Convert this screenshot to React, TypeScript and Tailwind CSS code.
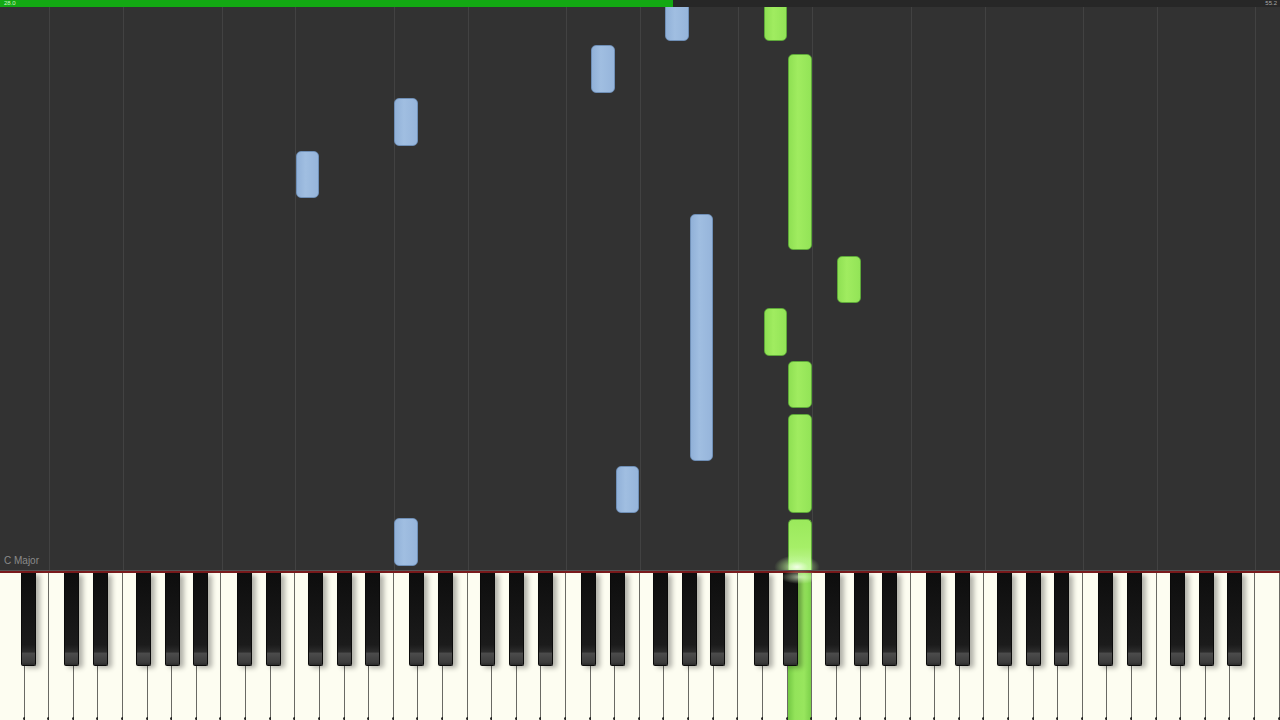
const W = 1280 / 52;
const NAMES = ['C', 'D', 'E', 'F', 'G', 'A', 'B'];
const BLACK_OFFSET: Record<string, number> = { C: -2, D: 2.5, F: -4.5, G: 0, A: 3.5 };

const ROLL_TOP = 7;

type Note = { key: number; y1: number; y2: number; color: 'blue' | 'green' };

const notes: Note[] = [
  { key: 27, y1: -10, y2: 41, color: 'blue' },
  { key: 24, y1: 45, y2: 93, color: 'blue' },
  { key: 16, y1: 98, y2: 146, color: 'blue' },
  { key: 12, y1: 151, y2: 198, color: 'blue' },
  { key: 28, y1: 214, y2: 461, color: 'blue' },
  { key: 25, y1: 466, y2: 513, color: 'blue' },
  { key: 16, y1: 518, y2: 566, color: 'blue' },
  { key: 31, y1: -10, y2: 41, color: 'green' },
  { key: 32, y1: 54, y2: 250, color: 'green' },
  { key: 34, y1: 256, y2: 303, color: 'green' },
  { key: 31, y1: 308, y2: 356, color: 'green' },
  { key: 32, y1: 361, y2: 408, color: 'green' },
  { key: 32, y1: 414, y2: 513, color: 'green' },
];

const whiteKeys = Array.from({ length: 52 }, (_, i) => NAMES[(i + 5) % 7]);
const gridLines = whiteKeys
  .map((n, i) => ({ n, i }))
  .filter(({ n, i }) => (n === 'C' || n === 'F') && i > 0);

const blackKeys = whiteKeys
  .map((n, i) => ({ n, i }))
  .filter(({ n, i }) => i < 51 && n in BLACK_OFFSET)
  .map(({ n, i }) => (i + 1) * W + BLACK_OFFSET[n]);

const PRESSED = 32;

const NoteBlock = ({ note }: { note: Note }) => {
  const cls =
    note.color === 'blue'
      ? 'border-[#6f8fb6] bg-[linear-gradient(to_right,#91b1d8,#a0bee1_40%,#96b5db)]'
      : 'border-[#5ea83a] bg-[linear-gradient(to_right,#8fe053,#a0ec60_40%,#93e457)]';
  return (
    <div
      className={`absolute rounded-[5px] border ${cls}`}
      style={{
        left: note.key * W + 0.5,
        width: W - 1,
        top: note.y1 - ROLL_TOP,
        height: note.y2 - note.y1,
      }}
    />
  );
};

export default function App() {
  return (
    <div className="flex h-[720px] w-[1280px] flex-col overflow-hidden bg-[#323232] font-['Liberation_Sans','Open_Sans',sans-serif]">
      {/* progress bar */}
      <div className="flex h-[7px] shrink-0 bg-[#272727]">
        <div className="flex h-full w-[673px] items-center bg-[#13a813] pl-[4px]">
          <span className="text-[6px] leading-[7px] text-[#c8f5c0]">28.0</span>
        </div>
        <div className="flex flex-1 items-center justify-end pr-[3px]">
          <span className="text-[6px] leading-[7px] text-[#a8a8a8]">55.2</span>
        </div>
      </div>

      {/* falling notes */}
      <div className="relative flex-1 overflow-hidden">
        {gridLines.map(({ i }) => (
          <div
            key={i}
            className="absolute top-0 h-full w-px bg-[#424242]"
            style={{ left: Math.round(i * W) }}
          />
        ))}
        {notes.map((n, idx) => (
          <NoteBlock key={idx} note={n} />
        ))}
        {/* note being played */}
        <div
          className="absolute rounded-t-[5px] border border-b-0 border-[#5ea83a] bg-[linear-gradient(to_bottom,#9be95c,#a6ef68_55%,#c6f7a0)]"
          style={{ left: PRESSED * W + 0.5, width: W - 1, top: 519 - ROLL_TOP, bottom: 0 }}
        />
        <div
          className="absolute h-[24px] w-[46px] rounded-full bg-[radial-gradient(ellipse_at_center,rgba(245,255,235,0.95),rgba(190,250,150,0.5)_35%,rgba(150,230,100,0)_70%)]"
          style={{ left: PRESSED * W - 14, bottom: -9 }}
        />
        <span className="absolute bottom-[4px] left-[4px] text-[10px] leading-none text-[#8a8a8a]">C Major</span>
      </div>

      {/* keyboard */}
      <div className="relative flex h-[150px] shrink-0 flex-col">
        <div className="h-px bg-[#555555]" />
        <div className="h-[2px] bg-[#7a1a1c]" />
        <div className="flex flex-1">
          {whiteKeys.map((_, i) => (
            <div
              key={i}
              className={`relative flex-1 border-r border-[#6a6a64] ${
                i === PRESSED
                  ? 'bg-[linear-gradient(to_right,#74c944,#93e35a_30%,#98e65e_70%,#7cd04a)]'
                  : 'bg-[#fdfdf1]'
              }`}
            >
              <div className="absolute bottom-0 right-[-2px] h-[3px] w-[3px] rounded-full bg-[#222]" />
            </div>
          ))}
        </div>
        {blackKeys.map((cx, idx) => (
          <div
            key={idx}
            className="absolute top-[3px] h-[93px] w-[15px] rounded-b-[2px] border border-t-0 border-[#0a0a0a] bg-[linear-gradient(to_bottom,#0d0d0d,#1b1b1b_78%,#2c2c2c_86%,#4c4c4c_87%,#3c3c3c_97%,#2a2a2a)] shadow-[4px_2px_5px_rgba(0,0,0,0.3)]"
            style={{ left: cx - 7.5 }}
          />
        ))}
        <div
          className="absolute top-0 h-[14px] w-[40px] rounded-full bg-[radial-gradient(ellipse_at_center,rgba(230,255,210,0.7),rgba(150,230,100,0)_70%)]"
          style={{ left: PRESSED * W - 8 }}
        />
      </div>
    </div>
  );
}
